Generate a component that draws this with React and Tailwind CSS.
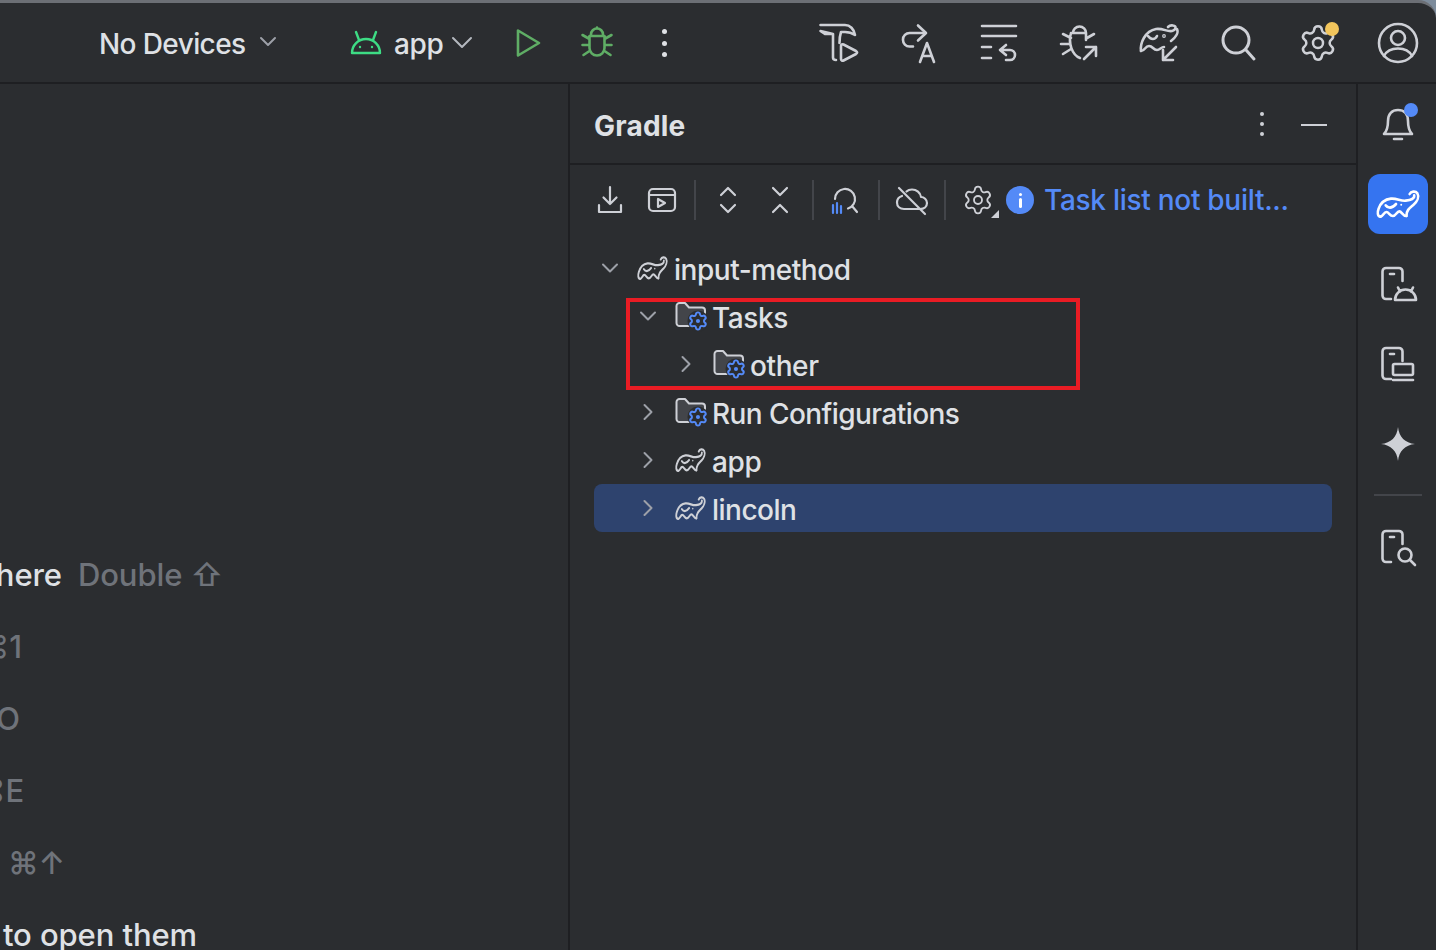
import React from "react";
import { Settings } from "lucide-react";

const S = "#ced0d6";

function I({ children, size = 40, box = 40, sw = 2.6, color = S, className = "" }) {
  return (
    <svg width={size} height={size} viewBox={`0 0 ${box} ${box}`} fill="none" stroke={color} strokeWidth={sw} strokeLinecap="round" strokeLinejoin="round" className={`block shrink-0 overflow-visible ${className}`}>
      {children}
    </svg>
  );
}

function Elephant({ w = 31, h = 24, color = S, sw = 8 }) {
  return (
    <svg width={w} height={h} viewBox="24 44 136 84" preserveAspectRatio="none" fill="none" stroke={color} strokeWidth={sw} strokeLinecap="round" strokeLinejoin="round" className="block shrink-0 overflow-visible">
      <path d="M38 124C28 124 28 110 32 100C38 84 52 72 70 70C88 68 100 78 116 76C132 74 144 70 142 60" />
      <path d="M118 122C118 104 128 98 140 88C152 78 158 64 152 54C146 46 132 48 128 56" />
      <path d="M38 124C46 124 48 110 56 110C64 110 66 122 76 122C86 122 88 108 96 108C104 108 106 122 118 122" />
      <path d="M54 90C60 98 72 102 86 86" />
      <circle cx="102" cy="88" r="3" fill={color} stroke="none" />
    </svg>
  );
}

function GearFolder() {
  return (
    <svg width="32" height="32" viewBox="0 0 32 32" fill="none" className="block shrink-0 translate-x-[1px] translate-y-[1px] overflow-visible">
      <path d="M1.500 5A3 3 0 0 1 4.500 2H10L14 6.500H27A3 3 0 0 1 30 9.500V22A3 3 0 0 1 27 25H4.500A3 3 0 0 1 1.500 22Z" fill="#43454a" stroke={S} strokeWidth="2" strokeLinejoin="round" />
      <circle cx="23" cy="20" r="10.500" fill="#2b2d30" />
      <g transform="translate(12.650 9.650) scale(0.860)">
        <path d="M9.671 4.136a2.34 2.34 0 0 1 4.659 0 2.34 2.34 0 0 0 3.319 1.915 2.34 2.34 0 0 1 2.33 4.033 2.34 2.34 0 0 0 0 3.831 2.34 2.34 0 0 1-2.33 4.033 2.34 2.34 0 0 0-3.319 1.915 2.34 2.34 0 0 1-4.659 0 2.34 2.34 0 0 0-3.32-1.915 2.34 2.34 0 0 1-2.33-4.033 2.34 2.34 0 0 0 0-3.831A2.34 2.34 0 0 1 6.35 6.051a2.34 2.34 0 0 0 3.319-1.915" stroke="#548af7" strokeWidth="2.300" />
        <circle cx="12" cy="12" r="2.400" fill="#548af7" />
      </g>
    </svg>
  );
}

function Chev({ open, color = "#9da0a8" }) {
  return (
    <svg width="20" height="20" viewBox="0 0 20 20" fill="none" stroke={color} strokeWidth="2" strokeLinecap="round" strokeLinejoin="round" className="block shrink-0">
      <path d={open ? "M3 6.500L10 13.500L17 6.500" : "M6.500 3L13.500 10L6.500 17"} />
    </svg>
  );
}

function Row({ indent, open, icon, label, selected, track = "tracking-[-0.4px]" }) {
  return (
    <div className={`flex h-12 items-center rounded-lg ${selected ? "bg-[#2e436e]" : ""}`} style={{ paddingLeft: indent }}>
      <div className="flex w-[32px] justify-center"><Chev open={open} /></div>
      <div className="ml-[10px] flex w-[32px] justify-center">{icon}</div>
      <span className={`ml-[6px] translate-y-[2px] whitespace-nowrap text-[28px] leading-none text-[#dfe1e5] ${track}`}>{label}</span>
    </div>
  );
}

function Sep({ ml }) {
  return <div className="h-10 w-[2px] shrink-0 bg-[#43454a]" style={{ marginLeft: ml }} />;
}

function Cell({ ml = 0, children }) {
  return <div className="flex w-[52px] shrink-0 justify-center" style={{ marginLeft: ml }}>{children}</div>;
}

function HeadCell({ children }) {
  return <div className="flex h-10 w-[79.7px] shrink-0 items-center justify-center">{children}</div>;
}

function Rail({ children, active }) {
  return (
    <div className="flex h-20 w-full items-center justify-center">
      {active ? <div className="flex h-[60px] w-[60px] items-center justify-center rounded-xl bg-[#3574f0]">{children}</div> : children}
    </div>
  );
}

function Phone({ children }) {
  return (
    <I>
      <path d="M13 35H8A3.500 3.500 0 0 1 4.500 31.500V7.500A3.500 3.500 0 0 1 8 4H21A3.500 3.500 0 0 1 24.500 7.500V17" />
      <path d="M12 10H16" />
      {children}
    </I>
  );
}

function Hint({ w, children, dim = true }) {
  return <div className={`flex h-[72px] shrink-0 items-center justify-end gap-4 whitespace-nowrap text-[31px] tracking-[-0.1px] ${dim ? "text-[#6f737a]" : "text-[#dfe1e5]"}`} style={{ width: w }}>{children}</div>;
}

export default function App() {
  return (
    <div className="h-[950px] w-[1436px] overflow-hidden bg-[#7d8c9c] font-['Inter',sans-serif] font-[450]">
      <div className="flex h-full flex-col overflow-hidden rounded-tr-[18px] border-t-[3px] border-[#6c6f75] bg-[#2b2d30]">
        <header className="flex h-[81px] shrink-0 items-center border-b-2 border-[#1e1f22] pt-[1px]">
          <span className="ml-[99px] w-[147px] shrink-0 translate-y-[1px] whitespace-nowrap text-[28px] tracking-[-0.6px] text-[#dfe1e5]">No Devices</span>
          <svg width="18" height="18" viewBox="0 0 18 18" fill="none" stroke="#9da0a8" strokeWidth="2" strokeLinecap="round" strokeLinejoin="round" className="ml-[13px] shrink-0 -translate-y-[1px]"><path d="M2 5L9 12L16 5" /></svg>
          <svg width="32" height="26" viewBox="0 0 32 26" fill="none" stroke="#3ddc84" strokeWidth="2.400" strokeLinecap="round" strokeLinejoin="round" className="ml-[73px] shrink-0 -translate-y-[1px]">
            <path d="M2 24A14 14 0 0 1 30 24Z" />
            <path d="M9 11L6 3M23 11L26 3" />
            <circle cx="10" cy="18" r="1.200" fill="#3ddc84" stroke="none" />
            <circle cx="22" cy="18" r="1.200" fill="#3ddc84" stroke="none" />
          </svg>
          <span className="ml-[12px] w-[48px] shrink-0 translate-y-[1px] text-[28px] tracking-[-0.3px] text-[#dfe1e5]">app</span>
          <svg width="22" height="22" viewBox="0 0 22 22" fill="none" stroke="#b4b8bf" strokeWidth="2" strokeLinecap="round" strokeLinejoin="round" className="ml-[9px] shrink-0"><path d="M2 6L11 15L20 6" /></svg>
          <svg width="28" height="32" viewBox="0 0 28 32" fill="none" stroke="#5fad65" strokeWidth="2.600" strokeLinecap="round" strokeLinejoin="round" className="ml-[41px] shrink-0">
            <path d="M4 3.500V28.500L25 16Z" />
          </svg>
          <svg width="34" height="34" viewBox="0 0 34 34" fill="none" stroke="#5fad65" strokeWidth="2.600" strokeLinecap="round" strokeLinejoin="round" className="ml-[38px] shrink-0">
            <path d="M11 8.500A6 6 0 0 1 23 8.500M9.500 10H24.500V22A7.500 7.500 0 0 1 9.500 22ZM17 2.500V1.500M2.500 9L9.500 13M31.500 9L24.500 13M2.500 19H9.500M31.500 19H24.500M3.500 29L9.500 25M30.500 29L24.500 25" />
          </svg>
          <div className="ml-[48px] flex h-7 w-[5px] shrink-0 flex-col justify-between">
            <div className="h-[5px] w-[5px] rounded-full bg-[#dfe1e5]" /><div className="h-[5px] w-[5px] rounded-full bg-[#dfe1e5]" /><div className="h-[5px] w-[5px] rounded-full bg-[#dfe1e5]" />
          </div>
          <div className="ml-[133px] flex">
            <HeadCell><I>
              <path d="M0.500 2H25C30 2 34 6 35 12C32 10 29 9 25 9H21C20 12 19.500 16 19.500 20M13 11H5L0.500 8ZM13 11V34.500C13 36 14 37 16 37" />
              <path d="M21 23C21 21.500 22.500 21 23.500 21.500L36 28C37.500 29 37.500 30 36 31L23.500 37.500C22.500 38 21 37.500 21 36Z" />
            </I></HeadCell>
            <HeadCell><I>
              <path d="M25 10H9.500A6.500 6.500 0 0 0 3 16.500V17A6.500 6.500 0 0 0 9.500 23.500H13" />
              <path d="M18 2.500L26 10L18 17.500" />
              <path d="M20 39L27 20L34 39M22.500 33H31.500" />
            </I></HeadCell>
            <HeadCell><I>
              <path d="M3 3H37M3 13H37M3 24H12M3 35H12M22 27H31A5 5 0 0 1 31 37H27M27 22L21 27L27 32" />
            </I></HeadCell>
            <HeadCell><I>
              <path d="M14 10A6.500 6.500 0 0 1 27 10M12 10H27V17M12 10C9 20 13 32 21 35M4 11L12 15M35 11L28 15M2 21H10M4 31L12 26M25 36L37 24M27 24H37V33" />
            </I></HeadCell>
            <HeadCell><I>
              <path d="M2 28C1 20 6 8 17 6C24 5 28 9 33 8C37 7 38 3 34 2.500C32 2 30 3 29 4" />
              <path d="M38 6C40 10 36 15 32 18" />
              <path d="M2 28C6 28 6 23 10 23C14 23 14 27 18 27C21 27 22 24 25 24" />
              <path d="M9 13C12 17 16 17 18 13" />
              <path d="M24 37L37 24M24 27V37H34" />
              <circle cx="25" cy="13" r="0.600" />
            </I></HeadCell>
            <HeadCell><I sw={3}>
              <circle cx="18" cy="17" r="13" />
              <path d="M28 27L36 36" />
            </I></HeadCell>
            <HeadCell><div className="relative">
              <Settings size={40} color={S} strokeWidth={1.500} />
              <div className="absolute -right-[1px] -top-[1px] h-[14px] w-[14px] rounded-full bg-[#f2c55c]" />
            </div></HeadCell>
            <HeadCell><I>
              <circle cx="20" cy="20" r="19" />
              <circle cx="20" cy="15" r="7" />
              <path d="M6 33C9 27 14 25.500 20 25.500C26 25.500 31 27 34 33" />
            </I></HeadCell>
          </div>
        </header>

        <div className="flex min-h-0 flex-1">
          <section className="w-[570px] shrink-0 overflow-hidden border-r-2 border-[#1e1f22] pt-[455px]">
            <Hint w={223}>
              <span className="text-[#dfe1e5]">Search Everywhere</span>
              <span>Double ⇧</span>
            </Hint>
            <Hint w={22}><span>Project View ⌘1</span></Hint>
            <Hint w={20}><span>Go to File ⇧⌘O</span></Hint>
            <Hint w={24}><span>Recent Files ⌘E</span></Hint>
            <Hint w={65}><span>Navigation Bar ⌘↑</span></Hint>
            <Hint w={197} dim={false}><span>Drop files here to open them</span></Hint>
          </section>

          <section className="flex min-w-0 flex-1 flex-col border-r-2 border-[#1e1f22]">
            <div className="flex h-[81px] shrink-0 items-center border-b-2 border-[#1e1f22] pl-[24px]">
              <span className="translate-y-[2px] text-[28px] font-bold tracking-[0.2px] text-[#dfe1e5]">Gradle</span>
              <div className="ml-auto flex h-6 w-1 translate-x-[1px] flex-col justify-between">
                <div className="h-1 w-1 rounded-full bg-[#ced0d6]" /><div className="h-1 w-1 rounded-full bg-[#ced0d6]" /><div className="h-1 w-1 rounded-full bg-[#ced0d6]" />
              </div>
              <div className="ml-[38px] mr-[29px] h-[2px] w-[26px] translate-y-[1px] bg-[#ced0d6]" />
            </div>

            <div className="flex h-[70px] shrink-0 items-center pl-[14px]">
              <Cell><I size={32} box={32} sw={2.200}><path d="M16 3V20M9.500 13.500L16 20L22.500 13.500M5 21V28H27V21" /></I></Cell>
              <Cell><I size={32} box={32} sw={2.200}><rect x="3" y="5" width="26" height="22" rx="4" /><path d="M3 11H29M12 15V23L19 19Z" /></I></Cell>
              <Sep ml={6} />
              <Cell ml={6}><I size={32} box={32} sw={2.200}><path d="M9 11L16 4L23 11M9 21L16 28L23 21" /></I></Cell>
              <Cell><I size={32} box={32} sw={2.200}><path d="M9 4L16 11L23 4M9 28L16 21L23 28" /></I></Cell>
              <Sep ml={6} />
              <Cell ml={5}><I size={32} box={32} sw={2.200}>
                <path d="M6 15A10 10 0 1 1 19 24.500M23 22L28 28" />
                <path d="M4 21V29M8 19V29M12 22V29" stroke="#548af7" />
              </I></Cell>
              <Sep ml={7} />
              <Cell ml={6}><I size={34} box={34} sw={2.200}>
                <path d="M9 26H25C29 26 32 23.500 32 20C32 16.500 29 14 26 14C25.500 9.500 21.500 6.500 17 6.500C15 6.500 13 7 11.500 8.500M7 13C4 14 2 16.500 2 19.500C2 23.500 5 26 9 26" />
                <path d="M4 5L30 31" />
              </I></Cell>
              <Sep ml={6} />
              <Cell ml={6}><div className="relative">
                <Settings size={32} color={S} strokeWidth={1.400} />
                <div className="absolute -bottom-[2px] -right-[5px] h-0 w-0 border-b-[8px] border-l-[8px] border-b-[#ced0d6] border-l-transparent" />
              </div></Cell>
              <div className="ml-[2px] flex h-7 w-7 shrink-0 items-center justify-center rounded-full bg-[#548af7]">
                <div className="flex flex-col items-center gap-[2px]">
                  <div className="h-[3px] w-[3px] rounded-full bg-white" />
                  <div className="h-[10px] w-[3px] rounded-sm bg-white" />
                </div>
              </div>
              <span className="ml-[10px] text-[28px] tracking-[-0.28px] text-[#548af7]">Task list not built...</span>
            </div>

            <div className="flex flex-col px-[24px] pt-[9px]">
              <Row indent={0} open icon={<Elephant />} label="input-method" track="tracking-[-0.45px]" />
              <div className="relative">
                <Row indent={38} open icon={<GearFolder />} label="Tasks" />
                <Row indent={76} icon={<GearFolder />} label="other" />
                <div className="absolute left-[32px] top-[6px] h-[92px] w-[454px] border-[4px] border-[#e91c24]" />
              </div>
              <Row indent={38} icon={<GearFolder />} label="Run Configurations" track="tracking-[-0.57px]" />
              <Row indent={38} icon={<Elephant />} label="app" />
              <Row indent={38} icon={<Elephant />} label="lincoln" selected track="tracking-[-0.5px]" />
            </div>
          </section>

          <aside className="flex w-[78px] shrink-0 flex-col items-center pl-[2px]">
            <Rail><div className="relative">
              <I><path d="M6 30C9 27 10 24 10 17C10 10 14 6 20 6C26 6 30 10 30 17C30 24 31 27 34 30ZM16 35H24" /></I>
              <div className="absolute -top-[1px] right-0 h-[14px] w-[14px] rounded-full bg-[#548af7]" />
            </div></Rail>
            <Rail active><Elephant w={44} h={28} color="#fff" sw={8} /></Rail>
            <Rail><Phone><path d="M17 36A10.500 10.500 0 0 1 38 36ZM22 27.500L20 23.500M33 27.500L35 23.500" /></Phone></Rail>
            <Rail><Phone><rect x="15" y="20" width="20" height="11" rx="1.500" /><path d="M15 36H35" /></Phone></Rail>
            <Rail><svg width="36" height="36" viewBox="0 0 36 36" className="block"><path d="M18 1C19 11 25 17 35 18C25 19 19 25 18 35C17 25 11 19 1 18C11 17 17 11 18 1Z" fill="#ced0d6" /></svg></Rail>
            <div className="mt-[10px] h-[2px] w-12 shrink-0 bg-[#43454a]" />
            <div className="mt-[11px] w-full"><Rail><Phone><circle cx="27" cy="28" r="6.500" /><path d="M32 33L37 38" /></Phone></Rail></div>
          </aside>
        </div>
      </div>
    </div>
  );
}
